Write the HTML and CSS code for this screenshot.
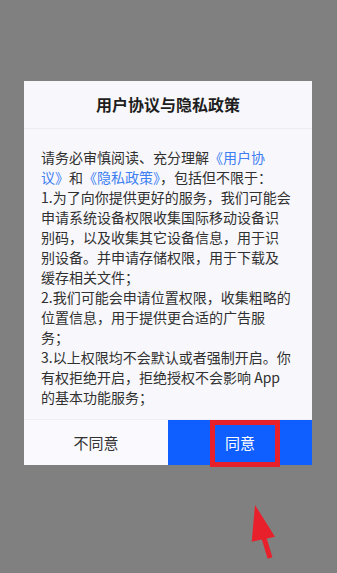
FILE: index.html
```html
<!DOCTYPE html>
<html lang="zh">
<head>
<meta charset="utf-8">
<link rel="stylesheet" href="styles.css">
</head>
<body>
<div class="screen">
  <div class="dialog">
    <div class="title">用户协议与隐私政策</div>
    <div class="content">
      请务必审慎阅读、充分理解<span class="link">《用户协</span><br><span class="link">议》</span>和<span class="link">《隐私政策》</span>，包括但不限于：<br>1.为了向你提供更好的服务，我们可能会<br>申请系统设备权限收集国际移动设备识<br>别码，以及收集其它设备信息，用于识<br>别设备。并申请存储权限，用于下载及<br>缓存相关文件；<br>2.我们可能会申请位置权限，收集粗略的<br>位置信息，用于提供更合适的广告服<br>务；<br>3.以上权限均不会默认或者强制开启。你<br>有权拒绝开启，拒绝授权不会影响 App<br>的基本功能服务；
    </div>
    <div class="actions">
      <div class="btn btn-cancel">不同意</div>
      <div class="btn btn-ok">同意</div>
    </div>
    <div class="highlight"></div>
  </div>
  <svg class="arrow" width="40" height="70" viewBox="0 0 40 70">
    <polygon points="15,5 11.7,41.7 35,36.7" fill="#e8202c"/>
    <line x1="24" y1="38" x2="30" y2="58" stroke="#e8202c" stroke-width="5"/>
  </svg>
</div>
</body>
</html>
```
FILE: styles.css
```css
html, body {
  margin: 0;
  padding: 0;
}
body {
  background: #808080;
  font-family: "Noto Sans CJK SC", "Noto Sans", sans-serif;
}
.screen {
  position: relative;
  width: 337px;
  height: 573px;
  overflow: hidden;
  padding-top: 81px;
  box-sizing: border-box;
}
.dialog {
  position: relative;
  margin-left: 24px;
  width: 288px;
  background: #f8f8fc;
}
.title {
  height: 47px;
  line-height: 47px;
  text-align: center;
  font-size: 16px;
  font-weight: bold;
  color: #1e1e1e;
  border-bottom: 1px solid #ececf1;
}
.content {
  padding: 18px 10px 12px 17px;
  font-size: 14px;
  line-height: 20px;
  color: #303030;
  white-space: nowrap;
}
.link {
  color: #3d7ef2;
}
.actions {
  display: grid;
  grid-template-columns: 144px 144px;
  height: 45px;
  border-top: 1px solid #f0f0f4;
}
.btn {
  display: flex;
  align-items: center;
  justify-content: center;
  font-size: 15px;
}
.btn-cancel {
  background: #fafafe;
  color: #333;
}
.btn-ok {
  background: #0f5eff;
  color: #ffffff;
}
.highlight {
  position: absolute;
  left: 186px;
  top: 339px;
  width: 60px;
  height: 37px;
  border: 5px solid #e8202c;
}
.arrow {
  position: absolute;
  left: 240px;
  top: 500px;
}
```
